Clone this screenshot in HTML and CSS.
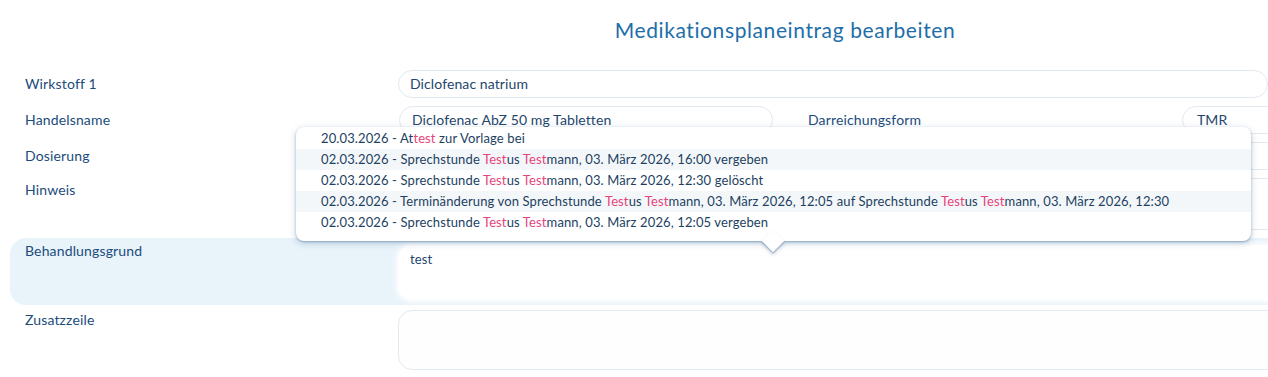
FILE: index.html
```html
<!DOCTYPE html>
<html lang="de">
<head>
<meta charset="utf-8">
<title>Medikationsplaneintrag bearbeiten</title>
<link rel="stylesheet" href="styles.css">
</head>
<body>
<div class="page">
  <h1 class="title">Medikationsplaneintrag bearbeiten</h1>
  <div class="form">
    <div class="row">
      <div class="label">Wirkstoff 1</div>
      <div class="field">
        <div class="input full">Diclofenac natrium</div>
      </div>
    </div>
    <div class="row">
      <div class="label">Handelsname</div>
      <div class="field split">
        <div class="input name">Diclofenac AbZ 50 mg Tabletten</div>
        <div class="sublabel">Darreichungsform</div>
        <div class="input form-input">TMR</div>
      </div>
    </div>
    <div class="row">
      <div class="label">Dosierung</div>
      <div class="field">
        <div class="input wide"></div>
      </div>
    </div>
    <div class="row">
      <div class="label label-hint">Hinweis</div>
      <div class="field">
        <div class="input wide area-hint"></div>
      </div>
    </div>
    <div class="row highlight">
      <div class="label label-top">Behandlungsgrund</div>
      <div class="field">
        <div class="textarea focused">test</div>
      </div>
    </div>
    <div class="row plain">
      <div class="label label-top">Zusatzzeile</div>
      <div class="field">
        <div class="textarea empty"></div>
      </div>
    </div>
  </div>

  <div class="popup">
    <div class="popup-row">20.03.2026 - At<span class="hl">test</span> zur Vorlage bei</div>
    <div class="popup-row alt">02.03.2026 - Sprechstunde <span class="hl">Test</span>us <span class="hl">Test</span>mann, 03. März 2026, 16:00 vergeben</div>
    <div class="popup-row">02.03.2026 - Sprechstunde <span class="hl">Test</span>us <span class="hl">Test</span>mann, 03. März 2026, 12:30 gelöscht</div>
    <div class="popup-row alt">02.03.2026 - Terminänderung von Sprechstunde <span class="hl">Test</span>us <span class="hl">Test</span>mann, 03. März 2026, 12:05 auf Sprechstunde <span class="hl">Test</span>us <span class="hl">Test</span>mann, 03. März 2026, 12:30</div>
    <div class="popup-row">02.03.2026 - Sprechstunde <span class="hl">Test</span>us <span class="hl">Test</span>mann, 03. März 2026, 12:05 vergeben</div>
    <div class="popup-arrow"></div>
  </div>
</div>
</body>
</html>
```

FILE: styles.css
```css
* { box-sizing: border-box; }

html, body {
  margin: 0;
  padding: 0;
  background: #ffffff;
}

body {
  font-family: Lato, "Liberation Sans", sans-serif;
  overflow: hidden;
}

.page {
  position: relative;
  width: 1268px;
  height: 377px;
  overflow: hidden;
}

.title {
  margin: 18px 0 0 0;
  padding-left: 302px;
  width: 1268px;
  text-align: center;
  font-size: 21px;
  line-height: 24px;
  font-weight: 400;
  color: #1e6ea9;
  letter-spacing: 0.6px;
}

.form {
  display: flex;
  flex-direction: column;
  gap: 8px;
  margin-top: 28px;
  width: 1400px;
}

.row {
  display: grid;
  grid-template-columns: 398px 1fr;
}

.label {
  padding-left: 25px;
  font-size: 14px;
  line-height: 28px;
  color: #1b4c7c;
  letter-spacing: 0.15px;
}

.label-top {
  line-height: 20px;
}

.label-hint {
  line-height: 24px;
}

.input {
  height: 28px;
  border: 1px solid #e3e9f0;
  border-radius: 14px;
  padding: 0 11px;
  font-size: 14px;
  line-height: 26px;
  letter-spacing: 0.1px;
  color: #24466c;
  background: #ffffff;
}

.full { width: 870px; }

.wide { width: 1000px; }

.area-hint { height: 52px; }

.split {
  display: flex;
  align-items: flex-start;
}

.name {
  width: 374px;
  margin-left: 1px;
  padding-left: 12px;
}

.sublabel {
  width: 409px;
  padding-left: 35px;
  font-size: 14px;
  line-height: 28px;
  letter-spacing: 0.15px;
  color: #1b4c7c;
}

.form-input {
  width: 200px;
  padding-left: 14px;
}

.highlight {
  margin-left: 10px;
  grid-template-columns: 388px 1fr;
  background: #e8f3fa;
  border-radius: 16px 0 0 16px;
  padding: 7px 0 5px 0;
}

.highlight .label {
  padding-left: 15px;
  margin-top: -4px;
}

.plain {
  margin-top: -3px;
}

.textarea {
  width: 1000px;
  height: 55px;
  border-radius: 14px;
  padding: 5px 12px;
  font-size: 13px;
  line-height: 18px;
  letter-spacing: 0.1px;
  color: #24466c;
  background: #ffffff;
}

.focused {
  box-shadow: 0 0 6px 2px #ffffff;
}

.empty {
  height: 60px;
  border: 1px solid #e3e9f0;
  background: #fefefe;
}

.popup {
  position: absolute;
  z-index: 5;
  left: 296px;
  top: 127px;
  width: 955px;
  height: 114px;
  background: #ffffff;
  border-radius: 8px;
  padding-top: 1px;
  box-shadow: 0 1px 2px rgba(70, 110, 150, 0.45), 0 2px 7px rgba(60, 100, 140, 0.3);
}

.popup-row {
  height: 21px;
  line-height: 21px;
  padding-left: 25px;
  font-size: 13px;
  letter-spacing: 0.12px;
  color: #1d3f62;
  white-space: nowrap;
}

.popup-row.alt {
  background: #f4f7f9;
}

.hl {
  color: #e5457d;
}

.popup-arrow {
  position: absolute;
  left: 469px;
  top: 106px;
  width: 16px;
  height: 16px;
  background: #ffffff;
  transform: rotate(45deg);
  box-shadow: 1px 1px 1px rgba(70, 110, 150, 0.4), 2px 2px 4px rgba(60, 100, 140, 0.25);
}
```
